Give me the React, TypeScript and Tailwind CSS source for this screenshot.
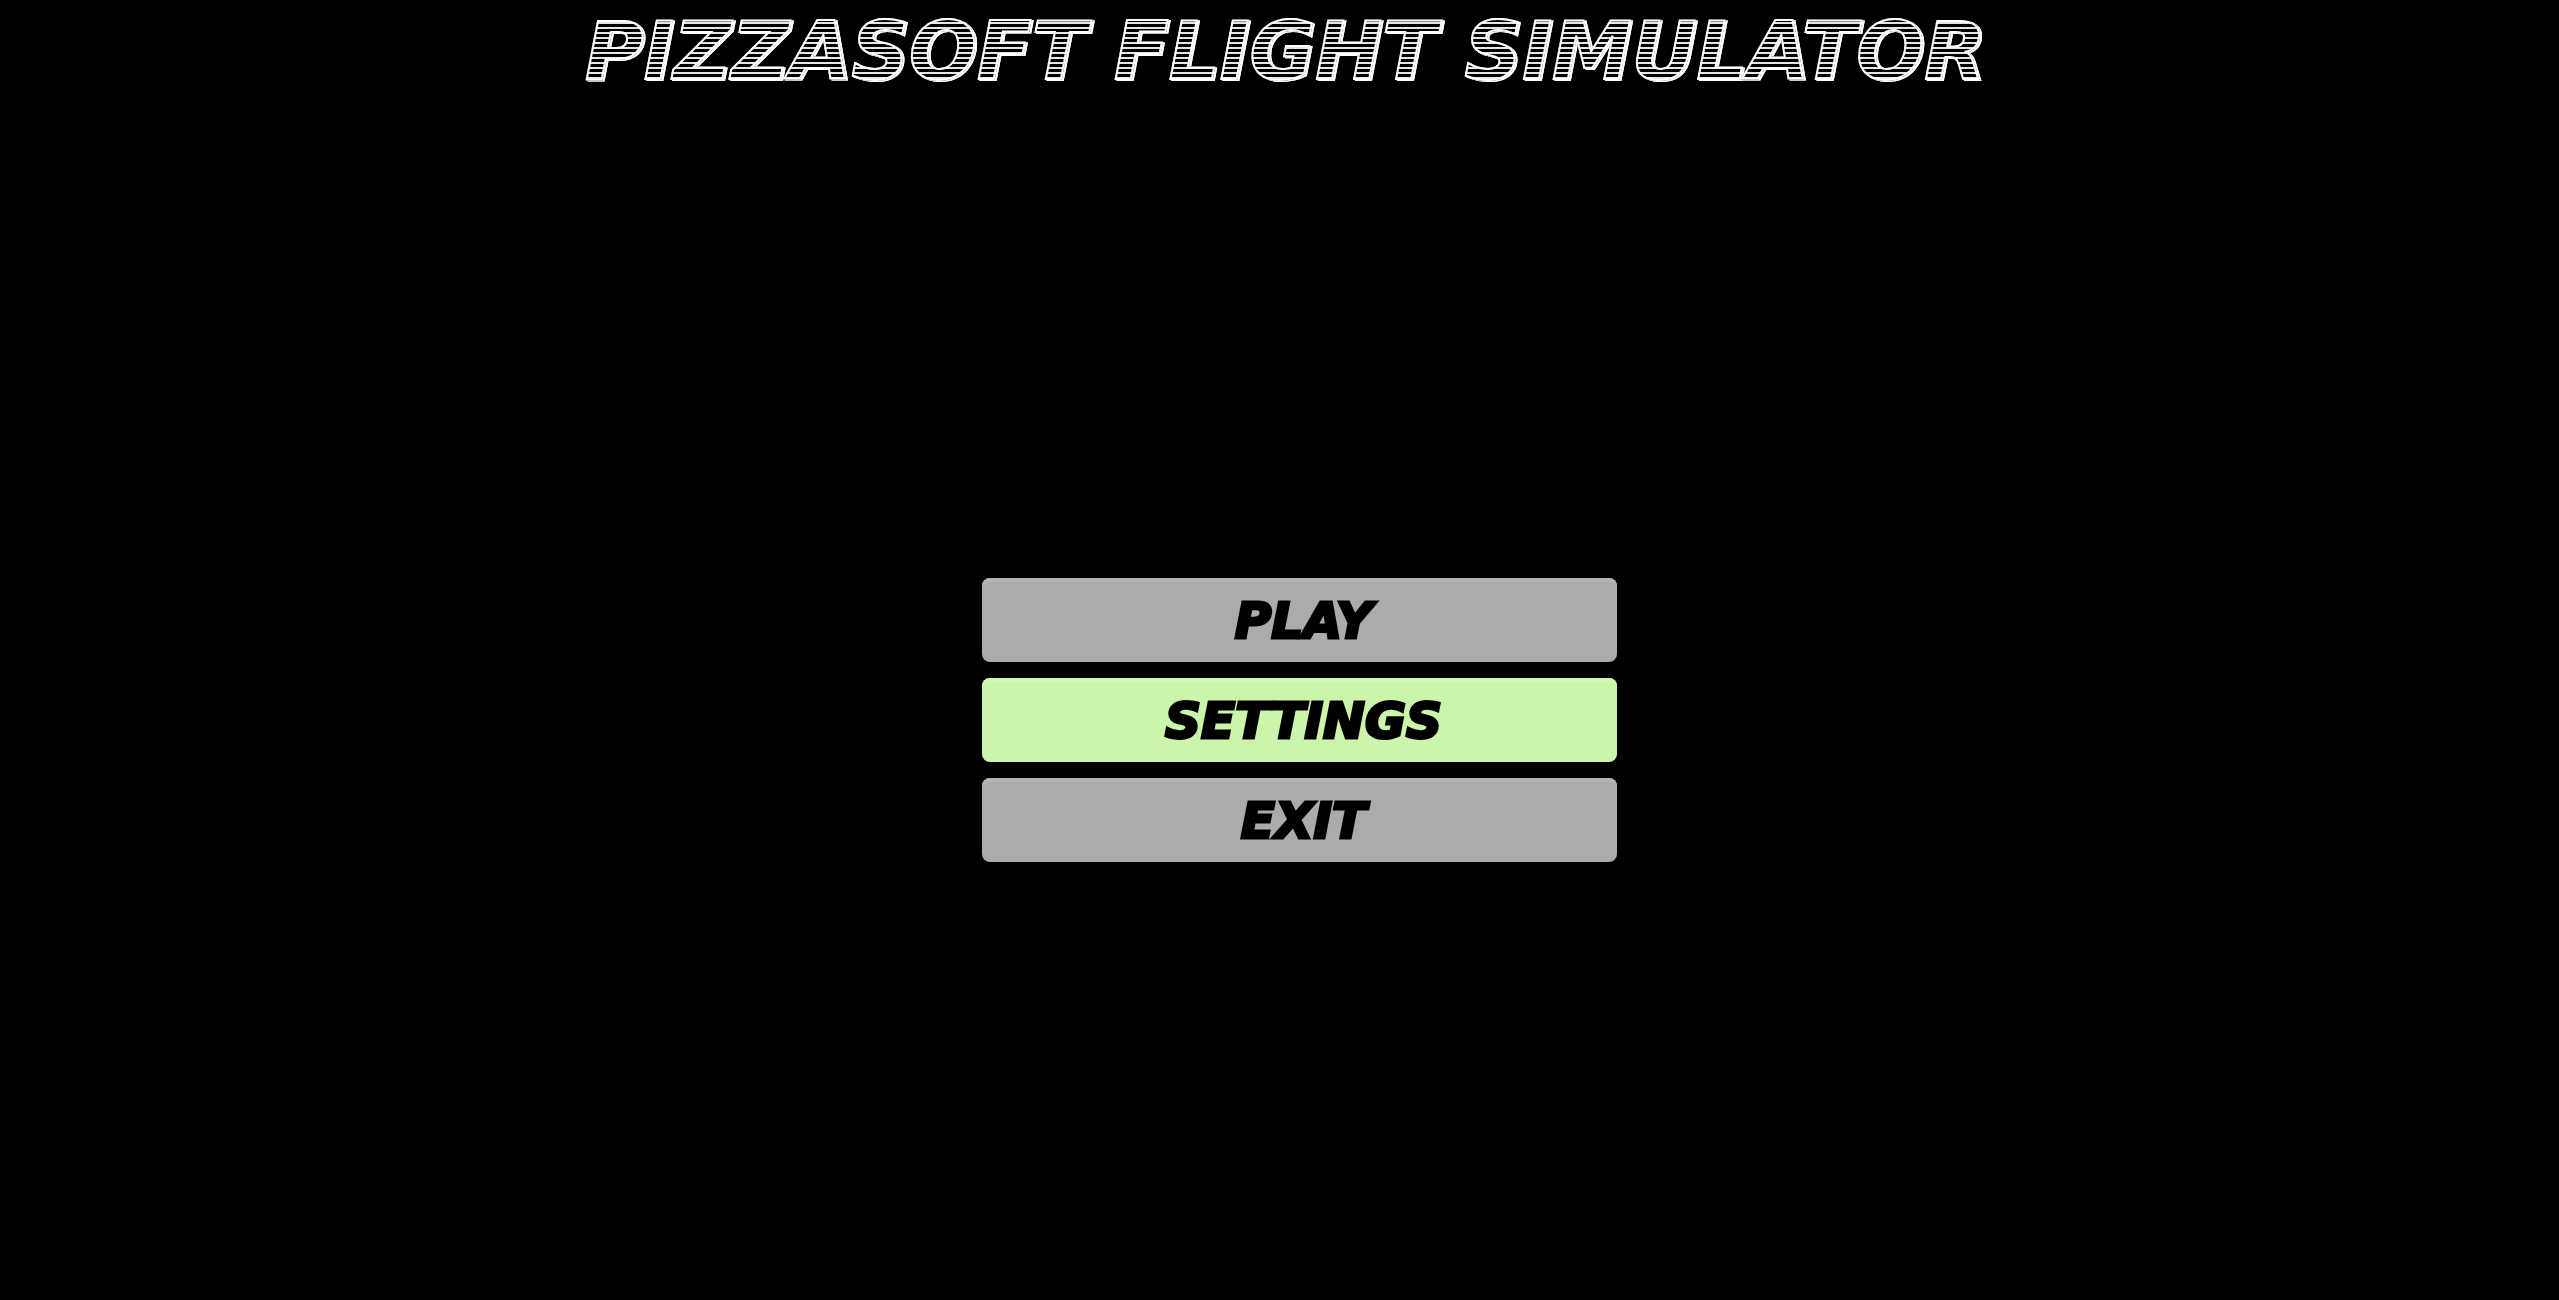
import React, { useState } from 'react'

const menuItems = ["PLAY", "SETTINGS", "EXIT"]

interface MenuButtonProps {
  label: string;
  active: boolean;
  onSelect: () => void;
}

function MenuButton({ label, active, onSelect }: MenuButtonProps) {
  return (
    <button
      type="button"
      onClick={onSelect}
      className={`h-[84px] w-full cursor-pointer rounded-lg pt-0.5 pl-2 text-[50px] leading-none font-bold italic text-black [-webkit-text-stroke:3px_black] ${
        active
          ? "bg-[#cbf5ab] shadow-[inset_0_4px_0_#cff8b2]"
          : "bg-[#ababab] shadow-[inset_0_4px_0_#b3b3b3]"
      }`}
    >
      {label}
    </button>
  )
}

export default function App() {
  const [selected, setSelected] = useState("SETTINGS");

  return (
    <div className="flex min-h-screen flex-col bg-black font-['DejaVu_Sans',sans-serif]">
      <header className="flex justify-center pt-1 pb-10 pl-3">
        {/* striped fill, white outline and a small extrusion to the lower right */}
        <h1 className="bg-[repeating-linear-gradient(to_bottom,#000_0px,#000_3px,#e5e5e5_3px,#e5e5e5_5px)] bg-clip-text text-[80px] leading-[96px] font-bold italic whitespace-nowrap text-transparent drop-shadow-[2px_1px_0_#fff] [-webkit-text-stroke:2px_white]">
          PIZZASOFT FLIGHT SIMULATOR
        </h1>
      </header>

      <main className="flex flex-1 flex-col justify-center pl-10">
        <ul className="mx-auto flex w-[25.2%] flex-col gap-4">
          {menuItems.map((item) => (
            <li key={item}>
              <MenuButton
                label={item}
                active={item === selected}
                onSelect={() => setSelected(item)}
              />
            </li>
          ))}
        </ul>
      </main>
    </div>
  )
}
